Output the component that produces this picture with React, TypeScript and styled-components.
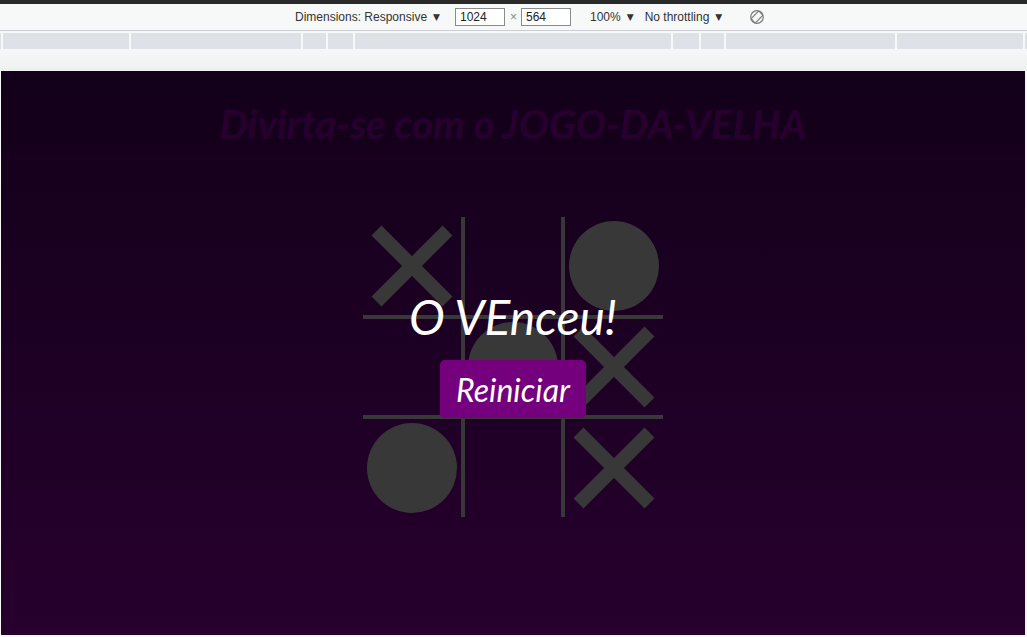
import React from "react";
import styled, { createGlobalStyle } from "styled-components";

const GlobalStyle = createGlobalStyle`
  html, body {
    margin: 0;
    padding: 0;
    background: #f7f8f8;
    overflow: hidden;
  }
  * { box-sizing: border-box; }
`;

const Frame = styled.div`
  width: 1027px;
  height: 637px;
  display: flex;
  flex-direction: column;
  background: #f7f8f8;
  font-family: "Liberation Sans", Arial, sans-serif;
`;

const TopStrip = styled.div`
  height: 4px;
  background: #2a2a2a;
  flex: none;
`;

const Toolbar = styled.div`
  height: 27px;
  flex: none;
  display: flex;
  align-items: center;
  padding-left: 295px;
  padding-bottom: 1px;
  border-bottom: 1px solid #cbcdd2;
  font-size: 12px;
  color: #333;
`;

const Label = styled.span<{ $ml?: number }>`
  margin-left: ${(p) => p.$ml ?? 0}px;
  white-space: nowrap;
  display: inline-flex;
  align-items: center;
`;

const Caret = styled.span`
  font-family: "DejaVu Sans", sans-serif;
  font-size: 9px;
  margin-left: 6px;
  color: #333;
`;

const SizeInput = styled.div<{ $ml: number }>`
  margin-left: ${(p) => p.$ml}px;
  width: 50px;
  height: 18px;
  border: 1px solid #8a8a8a;
  background: #fff;
  font-size: 12px;
  line-height: 16px;
  padding-left: 4px;
  color: #222;
`;

const Times = styled.span`
  margin-left: 5px;
  color: #888;
  font-size: 12px;
`;

const IconWrap = styled.span`
  margin-left: 27px;
  display: inline-flex;
  align-items: center;
`;

const Ruler = styled.div`
  margin-top: 2px;
  height: 16px;
  flex: none;
  display: flex;
`;

const RulerSeg = styled.div`
  background: #dee1e6;
  height: 100%;
`;

const RulerSep = styled.div`
  width: 2px;
  background: #f7f8f8;
  height: 100%;
  flex: none;
`;

const Gutter = styled.div`
  height: 22px;
  flex: none;
  background: linear-gradient(#f6f7f7, #eff0f0);
`;

const Viewport = styled.div`
  position: relative;
  margin-left: 1px;
  width: 1024px;
  height: 564px;
  flex: none;
  background: linear-gradient(#13001a, #27002e);
  display: flex;
  flex-direction: column;
  align-items: center;
  padding-top: 29px;
  font-family: Lato, "Liberation Sans", sans-serif;
`;

const Title = styled.h1`
  margin: 0;
  font-size: 40px;
  font-weight: 700;
  font-style: italic;
  color: #28002f;
  line-height: 48px;
`;

const Board = styled.div`
  margin-top: 69px;
  display: grid;
  grid-template-columns: repeat(3, 100px);
  grid-template-rows: repeat(3, 100px);
`;

const LINE = "#383838";

const Cell = styled.div<{ $r: number; $c: number }>`
  width: 100px;
  height: 100px;
  display: flex;
  align-items: center;
  justify-content: center;
  border-left: ${(p) => (p.$c > 0 ? `2px solid ${LINE}` : "none")};
  border-right: ${(p) => (p.$c < 2 ? `2px solid ${LINE}` : "none")};
  border-top: ${(p) => (p.$r > 0 ? `2px solid ${LINE}` : "none")};
  border-bottom: ${(p) => (p.$r < 2 ? `2px solid ${LINE}` : "none")};
`;

const Circle = styled.div`
  width: 90px;
  height: 90px;
  border-radius: 50%;
  background: ${LINE};
  flex: none;
`;

const Overlay = styled.div`
  position: absolute;
  inset: 0;
  display: flex;
  flex-direction: column;
  align-items: center;
  justify-content: center;
  gap: 15px;
`;

const WinText = styled.div`
  font-family: Lato, "Liberation Sans", sans-serif;
  font-style: italic;
  font-size: 48px;
  line-height: 57px;
  color: #fff;
`;

const RestartButton = styled.button`
  font-family: Lato, "Liberation Sans", sans-serif;
  font-style: italic;
  font-size: 32px;
  color: #fff;
  background: #74007e;
  border: none;
  border-radius: 5px;
  width: 146px;
  height: 58px;
  padding: 0;
  cursor: pointer;
`;

const XMark = () => (
  <svg width="100" height="100" viewBox="0 0 100 100" style={{ flex: "none" }}>
    <line x1="14.5" y1="14.5" x2="85.5" y2="85.5" stroke={LINE} strokeWidth="14" />
    <line x1="85.5" y1="14.5" x2="14.5" y2="85.5" stroke={LINE} strokeWidth="14" />
  </svg>
);

const RotateIcon = () => (
  <svg width="16" height="16" viewBox="0 0 16 16">
    <circle cx="8" cy="8" r="6.3" fill="none" stroke="#7a7a7a" strokeWidth="1.2" />
    <rect
      x="5"
      y="2.5"
      width="6"
      height="11"
      rx="1"
      fill="#f7f8f8"
      stroke="#7a7a7a"
      strokeWidth="1.2"
      transform="rotate(45 8 8)"
    />
  </svg>
);

const rulerGray = [1, 126, 170, 23, 25, 316, 26, 23, 169, 126, 2];

const board: ("X" | "O" | "")[] = ["X", "", "O", "", "O", "X", "O", "", "X"];

export default function App() {
  return (
    <>
      <GlobalStyle />
      <Frame>
        <TopStrip />
        <Toolbar>
          <Label>
            Dimensions: Responsive<Caret>▼</Caret>
          </Label>
          <SizeInput $ml={15}>1024</SizeInput>
          <Times>×</Times>
          <SizeInput $ml={4}>564</SizeInput>
          <Label $ml={19}>
            100%<Caret>▼</Caret>
          </Label>
          <Label $ml={11}>
            No throttling<Caret>▼</Caret>
          </Label>
          <IconWrap>
            <RotateIcon />
          </IconWrap>
        </Toolbar>
        <Ruler>
          {rulerGray.map((w, i) => (
            <React.Fragment key={i}>
              <RulerSeg style={{ width: w }} />
              {i < rulerGray.length - 1 && <RulerSep />}
            </React.Fragment>
          ))}
        </Ruler>
        <Gutter />
        <Viewport>
          <Title>Divirta-se com o JOGO-DA-VELHA</Title>
          <Board>
            {board.map((m, i) => (
              <Cell key={i} $r={Math.floor(i / 3)} $c={i % 3}>
                {m === "X" && <XMark />}
                {m === "O" && <Circle />}
              </Cell>
            ))}
          </Board>
          <Overlay>
            <WinText>O VEnceu!</WinText>
            <RestartButton>Reiniciar</RestartButton>
          </Overlay>
        </Viewport>
      </Frame>
    </>
  );
}
